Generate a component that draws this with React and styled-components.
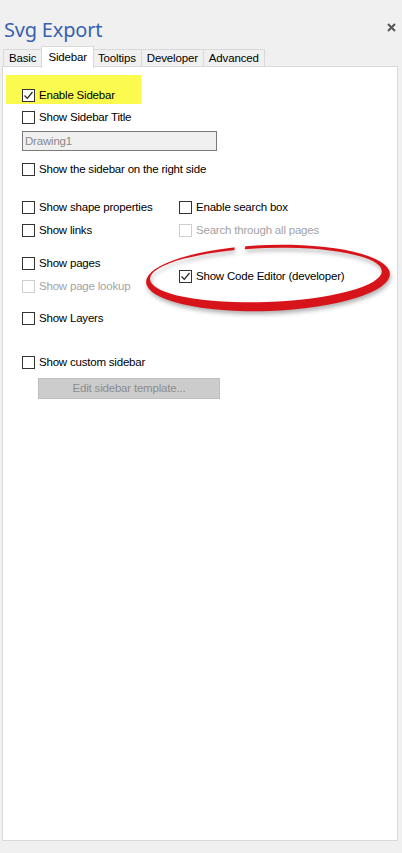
import React from 'react';
import styled, {createGlobalStyle} from 'styled-components';

const Global = createGlobalStyle`
  html, body { margin: 0; padding: 0; background: #f0f0f0; }
  body { font-family: "Liberation Sans", Arial, sans-serif; }
`;

const Window = styled.div`
  width: 402px;
  height: 853px;
  background: #f0f0f0;
  display: flex;
  flex-direction: column;
  position: relative;
  overflow: hidden;
`;

/* title bar */
const Header = styled.div`
  height: 46px;
  display: flex;
  align-items: flex-start;
  justify-content: space-between;
  padding: 0 6px 0 4px;
`;

const Title = styled.div`
  margin-top: 16px;
  font-family: "Noto Sans", "Liberation Sans", sans-serif;
  font-size: 20px;
  line-height: 28px;
  color: #3862b0;
  letter-spacing: -0.2px;
`;

const Close = styled.svg`
  margin-top: 23px;
  width: 9px;
  height: 9px;
`;

const TabStrip = styled.div`
  display: flex;
  align-items: flex-end;
  height: 21px;
  padding-left: 3px;
  position: relative;
  z-index: 2;
`;

const Tab = styled.div`
  height: ${p => (p.active ? '22px' : '18px')};
  margin-bottom: ${p => (p.active ? '-1px' : '0')};
  padding: 0 ${p => (p.active ? '6px' : '5px')};
  margin-left: ${p => (p.active ? '-1px' : '0')};
  margin-right: ${p => (p.active ? '-1px' : '0')};
  background: ${p => (p.active ? '#ffffff' : '#f0f0f0')};
  border: 1px solid #d9d9d9;
  border-bottom: ${p => (p.active ? 'none' : '1px solid #d9d9d9')};
  border-left: ${p => (p.first || p.active ? '1px solid #d9d9d9' : 'none')};
  font-size: 11.5px;
  letter-spacing: -0.15px;
  line-height: ${p => (p.active ? '20px' : '17px')};
  color: #000;
  position: relative;
  z-index: ${p => (p.active ? 3 : 1)};
  box-sizing: border-box;
`;

const Panel = styled.div`
  margin: -1px 4px 0 2px;
  height: 775px;
  background: #fff;
  border: 1px solid #d9d9d9;
  box-sizing: border-box;
  display: flex;
  flex-direction: column;
  position: relative;
`;

const Highlight = styled.div`
  margin: 8px 0 0 3px;
  width: 135px;
  height: 29px;
  background: #fbfb4f;
  padding: 12px 0 0 16px;
  box-sizing: border-box;
`;

const Body = styled.div`
  padding-left: 19px;
  display: flex;
  flex-direction: column;
`;

const RowWrap = styled.label`
  display: flex;
  align-items: center;
  height: 16px;
  margin-top: ${p => p.gap || 0}px;
  font-size: 11.5px;
  letter-spacing: -0.2px;
  color: ${p => (p.disabled ? '#a3a3a3' : '#000')};
  white-space: nowrap;
`;

const Box = styled.span`
  width: 13px;
  height: 13px;
  box-sizing: border-box;
  border: 1px solid ${p => (p.disabled ? '#cfcfcf' : '#333')};
  background: #fff;
  margin-right: 4px;
  display: flex;
  align-items: center;
  justify-content: center;
  flex: none;
`;

const TextInput = styled.div`
  margin-top: 6px;
  width: 195px;
  height: 20px;
  box-sizing: border-box;
  border: 1px solid #7a7a7a;
  background: #f0f0f0;
  font-size: 11.5px;
  letter-spacing: -0.2px;
  line-height: 18px;
  padding-left: 2px;
  color: #8a8a8a;
`;

const Columns = styled.div`
  display: flex;
  margin-top: 22px;
`;

const Column = styled.div`
  display: flex;
  flex-direction: column;
  width: ${p => p.width || 'auto'};
`;

const Button = styled.div`
  margin: 8px 0 0 16px;
  width: 182px;
  height: 21px;
  background: #cccccc;
  border: 1px solid #bfbfbf;
  box-sizing: border-box;
  font-size: 11.5px;
  letter-spacing: -0.2px;
  line-height: 19px;
  text-align: center;
  color: #8c8c8c;
`;

/* red marker ellipse drawn over the dialog */
const Marker = styled.svg`
  position: absolute;
  left: 130px;
  top: 230px;
  width: 272px;
  height: 95px;
  pointer-events: none;
  overflow: visible;
  filter: drop-shadow(1px 3px 2px rgba(0, 0, 0, 0.3));
`;

const Check = () => (
  <svg width="11" height="11" viewBox="0 0 11 11">
    <path d="M1.5 5.5 L4.3 8.3 L9.5 2" fill="none" stroke="#222" strokeWidth="1.2" />
  </svg>
);

const Row = ({label, checked, disabled, gap}) => (
  <RowWrap disabled={disabled} gap={gap}>
    <Box disabled={disabled}>{checked && <Check />}</Box>
    {label}
  </RowWrap>
);

export default function App() {
  const tabs = ['Basic', 'Sidebar', 'Tooltips', 'Developer', 'Advanced'];
  return (
    <Window>
      <Global />
      <Header>
        <Title>Svg Export</Title>
        <Close viewBox="0 0 9 9">
          <path d="M1 1 L8 8 M8 1 L1 8" stroke="#555" strokeWidth="2" />
        </Close>
      </Header>
      <TabStrip>
        {tabs.map((t, i) => (
          <Tab key={t} first={i === 0} active={t === 'Sidebar'}>{t}</Tab>
        ))}
      </TabStrip>
      <Panel>
        <Highlight>
          <Row label="Enable Sidebar" checked />
        </Highlight>
        <Body>
          <Row label="Show Sidebar Title" gap={5} />
          <TextInput>Drawing1</TextInput>
          <Row label="Show the sidebar on the right side" gap={10} />
          <Columns>
            <Column width="157px">
              <Row label="Show shape properties" />
              <Row label="Show links" gap={7} />
              <Row label="Show pages" gap={17} />
              <Row label="Show page lookup" disabled gap={7} />
              <Row label="Show Layers" gap={16} />
            </Column>
            <Column>
              <Row label="Enable search box" />
              <Row label="Search through all pages" disabled gap={7} />
              <Row label="Show Code Editor (developer)" checked gap={30} />
            </Column>
          </Columns>
          <Row label="Show custom sidebar" gap={28} />
          <Button>Edit sidebar template...</Button>
        </Body>
      </Panel>
      <Marker viewBox="0 0 272 95">
        <defs>
          <mask id="ring" maskUnits="userSpaceOnUse" x="0" y="0" width="272" height="95">
            <ellipse cx="138" cy="48" rx="122" ry="33" fill="#fff" transform="rotate(-2 138 48)" />
            <ellipse cx="136" cy="45" rx="116" ry="27" fill="#000" transform="rotate(-2 138 48)" />
            <path d="M106 6 L117 6 L114 24 L104 24 Z" fill="#000" />
          </mask>
        </defs>
        <rect x="0" y="0" width="272" height="95" fill="#d8141b" mask="url(#ring)" />
      </Marker>
    </Window>
  );
}
